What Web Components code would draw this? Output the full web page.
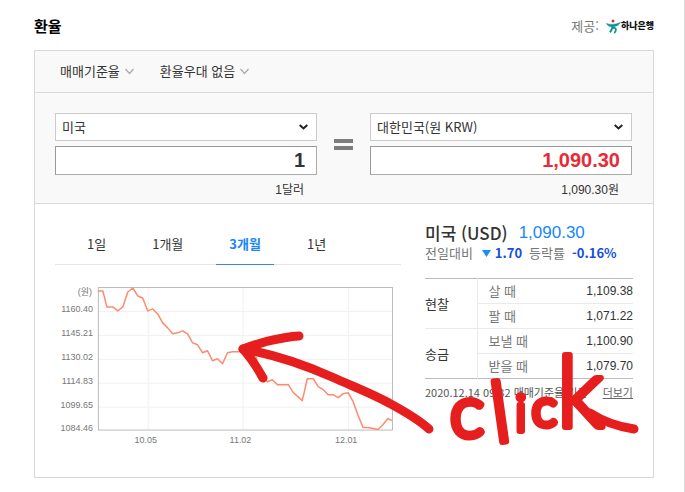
<!DOCTYPE html>
<html lang="ko">
<head>
<meta charset="utf-8">
<meta name="viewport" content="width=device-width, initial-scale=1">
<title>환율</title>
<style>
  body {
    margin: 0;
    background: #fff;
    color: #333;
    font-family: "Noto Sans CJK KR", sans-serif;
    font-size: 13px;
    line-height: 20px;
  }
</style>
</head>
<body>

<rate-page>
  <rate-header slot="header" heading="환율">하나은행</rate-header>
  <rate-card>
    <rate-filter slot="filters">매매기준율</rate-filter>
    <rate-filter slot="filters">환율우대 없음</rate-filter>
    <currency-field slot="from" name="from" currency="미국" amount="1">1달러</currency-field>
    <currency-field slot="to" name="to" currency="대한민국(원 KRW)" amount="1,090.30" result>1,090.30원</currency-field>
    <period-tabs slot="chart" selected="3개월"></period-tabs>
    <rate-chart slot="chart"></rate-chart>
    <rate-summary slot="detail"></rate-summary>
    <rate-table slot="detail"></rate-table>
  </rate-card>
  <ink-note slot="note"></ink-note>
</rate-page>

<script>
// small helper, every element here is a static template + open shadow root
const attach = (el, html) => {
  const template = document.createElement('template');
  template.innerHTML = html;
  const shadow = el.attachShadow({ mode: 'open' });
  shadow.appendChild(template.content.cloneNode(true));
  return shadow;
};

class RatePage extends HTMLElement {
  constructor() {
    super();
    attach(this, /*html*/ `
      <style>
        :host {
          display: block;
          position: relative;
          box-sizing: border-box;
          min-height: 100vh;
          padding: 16px 30px 14px 34px;
          border-right: 1px solid #d8d8d8;
        }
      </style>
      <slot name="header"></slot>
      <main><slot></slot></main>
      <slot name="note"></slot>`);
  }
}

class RateHeader extends HTMLElement {
  constructor() {
    super();
    const shadow = attach(this, /*html*/ `
      <style>
        :host {
          display: flex;
          justify-content: space-between;
          align-items: center;
          margin-bottom: 14px;
        }
        h2 {
          margin: 0;
          font-size: 15px;
          line-height: 20px;
          color: #000;
        }
        .provider {
          display: flex;
          align-items: center;
          color: #777;
        }
        svg {
          margin-left: 7px;
        }
        b {
          font-size: 9px;
          font-weight: 900;
          color: #111;
        }
      </style>
      <h2></h2>
      <div class="provider">
        제공:
        <svg width="15" height="15" viewBox="0 0 15 15" fill="none" aria-hidden="true">
          <circle cx="7" cy="2" r="1.5" fill="#e5265e"/>
          <path d="M.5 4.500C4 5.800 9 5.800 14.500 3.500 13 6.500 9 8 6 7.800 3.500 7.600 1.500 6.700 .5 4.500Z" fill="#0a9294" stroke="#0a9294" stroke-width=".5"/>
          <path d="M6.500 7C6.300 10 5.500 12 3.800 13.300M5.600 9.800C7.500 8.300 10 8.600 9.900 10.800 9.800 12.300 9.200 13.200 8.200 14" stroke="#0a9294" stroke-width="1.800"/>
        </svg>
        <b><slot></slot></b>
      </div>`);
    shadow.querySelector('h2').textContent = this.getAttribute('heading');
  }
}

class RateCard extends HTMLElement {
  constructor() {
    super();
    attach(this, /*html*/ `
      <style>
        :host {
          display: block;
          border: 1px solid #d8d8d8;
        }
        .filters {
          display: flex;
          gap: 26px;
          padding: 10px 25px 11px;
          background: #f9f9f9;
          border-bottom: 1px solid #d8d8d8;
        }
        .converter {
          display: grid;
          grid-template-columns: 1fr 19px 1fr;
          gap: 17px;
          padding: 20px 21px 3px 20px;
          background: #f9f9f9;
          border-bottom: 1px solid #d8d8d8;
        }
        .equals {
          height: 3px;
          margin-top: 26px;
          border: solid #7d7d7d;
          border-width: 4px 0;
        }
        .body {
          display: grid;
          grid-template-columns: 1fr 208px;
          gap: 24px;
          padding: 19px 20px 25px;
        }
      </style>
      <div class="filters"><slot name="filters"></slot></div>
      <div class="converter">
        <slot name="from"></slot>
        <div class="equals" role="img" aria-label="="></div>
        <slot name="to"></slot>
      </div>
      <div class="body">
        <section><slot name="chart"></slot></section>
        <section><slot name="detail"></slot></section>
      </div>`);
  }
}

class RateFilter extends HTMLElement {
  constructor() {
    super();
    attach(this, /*html*/ `
      <style>
        :host {
          display: block;
        }
        button {
          display: flex;
          align-items: center;
          gap: 5px;
          padding: 0;
          border: none;
          background: none;
          color: inherit;
          font: inherit;
          cursor: pointer;
        }
      </style>
      <button type="button" aria-haspopup="listbox">
        <slot></slot>
        <svg width="9" height="7" viewBox="0 0 9 7" fill="none" stroke="#aaa" stroke-width="1.3" aria-hidden="true">
          <path d="M.5 1 4.500 5.500 8.500 1"/>
        </svg>
      </button>`);
  }
}

class CurrencyField extends HTMLElement {
  constructor() {
    super();
    const shadow = attach(this, /*html*/ `
      <style>
        :host {
          display: block;
          --amount: #333;
        }
        :host([result]) {
          --amount: #e72b37;
        }
        select, input {
          display: block;
          box-sizing: border-box;
          width: 100%;
          margin: 0 0 5px;
          border: 1px solid #ccc;
          border-radius: 0;
          font: inherit;
          color: #333;
        }
        select {
          appearance: none;
          height: 28px;
          padding: 0 24px 0 6px;
          background: #fff url("data:image/svg+xml,%3Csvg width='9' height='6' fill='none' xmlns='http://www.w3.org/2000/svg'%3E%3Cpath d='M.7 1 4.500 4.500 8.300 1' stroke='%23222' stroke-width='2'/%3E%3C/svg%3E") no-repeat right 8px center;
        }
        input {
          height: 29px;
          padding: 0 11px;
          border-color: #999 #aaa #aaa #999;
          background: #fff;
          color: var(--amount);
          font-family: "Liberation Sans", sans-serif;
          font-size: 20px;
          font-weight: bold;
          text-align: right;
        }
        output {
          display: block;
          padding-right: 13px;
          font-family: "Liberation Sans", "Noto Sans CJK KR", sans-serif;
          font-size: 12px;
          text-align: right;
        }
      </style>
      <select aria-label="통화"><option></option></select>
      <input id="amount" type="text" aria-label="금액">
      <output for="amount"><slot></slot></output>`);
    shadow.querySelector('option').textContent = this.getAttribute('currency');
    shadow.querySelector('input').value = this.getAttribute('amount');
  }
}

class PeriodTabs extends HTMLElement {
  constructor() {
    super();
    const selected = this.getAttribute('selected');
    const tabs = ['1일', '1개월', '3개월', '1년'].map((t) =>
      `<button type="button" role="tab" aria-selected="${t === selected}">${t}</button>`);
    attach(this, /*html*/ `
      <style>
        :host {
          display: block;
          border-bottom: 1px solid #e5e5e5;
        }
        div {
          display: flex;
          gap: 20px;
          padding-left: 19px;
        }
        button {
          height: 42px;
          margin-bottom: -1px;
          padding: 0 13px;
          border: solid transparent;
          border-width: 0 0 1px;
          background: none;
          color: inherit;
          font: inherit;
          cursor: pointer;
        }
        [aria-selected="true"] {
          border-bottom-color: #3f83ea;
          color: #1687fb;
          font-weight: bold;
        }
      </style>
      <div role="tablist">${tabs.join('')}</div>`);
  }
}

class RateChart extends HTMLElement {
  constructor() {
    super();
    const rows = [[24, '1160.40'], [48, '1145.21'], [72, '1130.02'], [96, '1114.83'], [120, '1099.65'], [143, '1084.46']];
    const cols = [[50, '10.05'], [145, '11.02'], [251, '12.01']];
    const rates = `0,4 5,4 9,20 15,20 20,24 25,20 30,5 35,1 40,9 45,11 50,24 55,22 60,27 65,36 70,41
      75,47 80,46 85,44 90,47 95,56 100,58 105,66 110,64 115,74 120,72 125,77 130,66 135,65 155,65
      159,71 163,90 170,95 175,93 180,98 191,98 196,106 205,114 210,92 216,92 221,100 226,103
      231,108 236,108 241,111 246,107 251,106 256,115 261,129 266,141 271,141 276,142 281,143
      286,138 291,132 295,134`;
    attach(this, /*html*/ `
      <style>
        :host {
          display: block;
          margin-top: 17px;
        }
        svg {
          display: block;
          width: 100%;
          height: auto;
        }
        text {
          fill: #777;
          font-family: "Liberation Sans", "Noto Sans CJK KR", sans-serif;
          font-size: 9px;
        }
        .y { text-anchor: end; }
        .x { text-anchor: middle; }
      </style>
      <svg viewBox="0 0 347 170" role="img" aria-label="환율 차트">
        <g transform="translate(43 5)">
          <path d="${rows.slice(0, 5).map(([y]) => `M0 ${y}.5H296`).join('')}${cols.map(([x]) => `M${x}.5 0V143`).join('')}" stroke="#f0f0f0"/>
          <rect x=".5" y=".5" width="295" height="143" fill="none" stroke="#bbb"/>
          <polyline points="${rates}" fill="none" stroke="#ff8a70" stroke-width="1.500" stroke-linejoin="round"/>
          <text class="y" x="-6" y="8">(원)</text>
          ${rows.map(([y, t]) => `<text class="y" x="-5" y="${y + 1}">${t}</text>`).join('')}
          ${cols.map(([x, t]) => `<text class="x" x="${x - 2}" y="156">${t}</text>`).join('')}
        </g>
      </svg>`);
  }
}

class RateSummary extends HTMLElement {
  constructor() {
    super();
    attach(this, /*html*/ `
      <style>
        :host {
          display: block;
        }
        h3, p {
          display: flex;
          align-items: center;
          margin: 0;
          white-space: nowrap;
        }
        h3 {
          gap: 11px;
          font-size: 17px;
          font-weight: 500;
          line-height: 20px;
        }
        h3 span {
          color: #1687fb;
          font-family: "Liberation Sans", sans-serif;
          font-weight: normal;
        }
        p {
          gap: 7px;
          color: #777;
        }
        b {
          color: #1450dc;
        }
        svg {
          margin: 0 -3px 0 2px;
        }
      </style>
      <h3>미국 (USD) <span>1,090.30</span></h3>
      <p>전일대비
        <svg width="9" height="7" viewBox="0 0 9 7" aria-hidden="true"><path d="M0 0H9L4.500 7Z" fill="#1490ff"/></svg>
        <b>1.70</b> 등락률 <b>-0.16%</b></p>`);
  }
}

class RateTable extends HTMLElement {
  constructor() {
    super();
    attach(this, /*html*/ `
      <style>
        :host {
          display: block;
          margin-top: 15px;
        }
        table {
          width: 100%;
          border-collapse: collapse;
          border: solid #bbb;
          border-width: 1px 0;
        }
        th, td {
          box-sizing: border-box;
          height: 25px;
          padding: 0;
          border-top: 1px solid #eaeaea;
          font-weight: normal;
          text-align: left;
        }
        tbody:first-child tr:first-child > * {
          border-top-color: #bbb;
        }
        [scope="rowgroup"] {
          width: 52px;
          border-right: 1px solid #eaeaea;
        }
        [scope="row"] {
          padding-left: 11px;
          color: #777;
        }
        td {
          font-family: "Liberation Sans", sans-serif;
          font-size: 12px;
          text-align: right;
        }
        footer {
          display: flex;
          justify-content: space-between;
          margin-top: 3px;
          font-size: 11px;
          color: #555;
          white-space: nowrap;
        }
        a {
          color: #666;
        }
      </style>
      <table>
        <tbody>
          <tr><th scope="rowgroup" rowspan="2">현찰</th><th scope="row">살 때</th><td>1,109.38</td></tr>
          <tr><th scope="row">팔 때</th><td>1,071.22</td></tr>
        </tbody>
        <tbody>
          <tr><th scope="rowgroup" rowspan="2">송금</th><th scope="row">보낼 때</th><td>1,100.90</td></tr>
          <tr><th scope="row">받을 때</th><td>1,079.70</td></tr>
        </tbody>
      </table>
      <footer><span>2020.12.14 09:32 매매기준율 기준</span><a href="#more">더보기</a></footer>`);
  }
}

// red marker arrow and note, lies over the whole page
class InkNote extends HTMLElement {
  constructor() {
    super();
    attach(this, /*html*/ `
      <style>
        :host {
          position: absolute;
          top: 0;
          left: 0;
          right: -1px;
          pointer-events: none;
        }
        svg {
          display: block;
          width: 100%;
          height: auto;
        }
        path {
          fill: none;
          stroke: #e71e1e;
          stroke-width: 9px;
          stroke-linecap: round;
          stroke-linejoin: round;
        }
        text {
          fill: #e71e1e;
          stroke: #e71e1e;
          stroke-linejoin: round;
          font-family: Lato, sans-serif;
          font-weight: 300;
        }
      </style>
      <svg viewBox="0 0 685 492">
        <path d="M299 336C290 336 285 338 278 339 265 341 254 345 243 349 252 359 257 367 263 378"/>
        <path d="M243 349C278 355 305 365 332 377 352 386 371 393 389 403 402 410 417 418 429 429"/>
        <text><tspan x="450" y="437" font-size="72" stroke-width="7">c</tspan><tspan x="495" y="443" font-size="84" stroke-width="6" rotate="-8">l</tspan><tspan x="515" y="431" font-size="52" stroke-width="6">i</tspan><tspan x="532" y="426" font-size="52" stroke-width="7">c</tspan><tspan x="557" y="427" font-size="98" stroke-width="6">k</tspan></text>
        <path d="M590 413C604 422 620 427 634 429"/>
      </svg>`);
  }
}

customElements.define('rate-page', RatePage);
customElements.define('rate-header', RateHeader);
customElements.define('rate-card', RateCard);
customElements.define('rate-filter', RateFilter);
customElements.define('currency-field', CurrencyField);
customElements.define('period-tabs', PeriodTabs);
customElements.define('rate-chart', RateChart);
customElements.define('rate-summary', RateSummary);
customElements.define('rate-table', RateTable);
customElements.define('ink-note', InkNote);
</script>
</body>
</html>
